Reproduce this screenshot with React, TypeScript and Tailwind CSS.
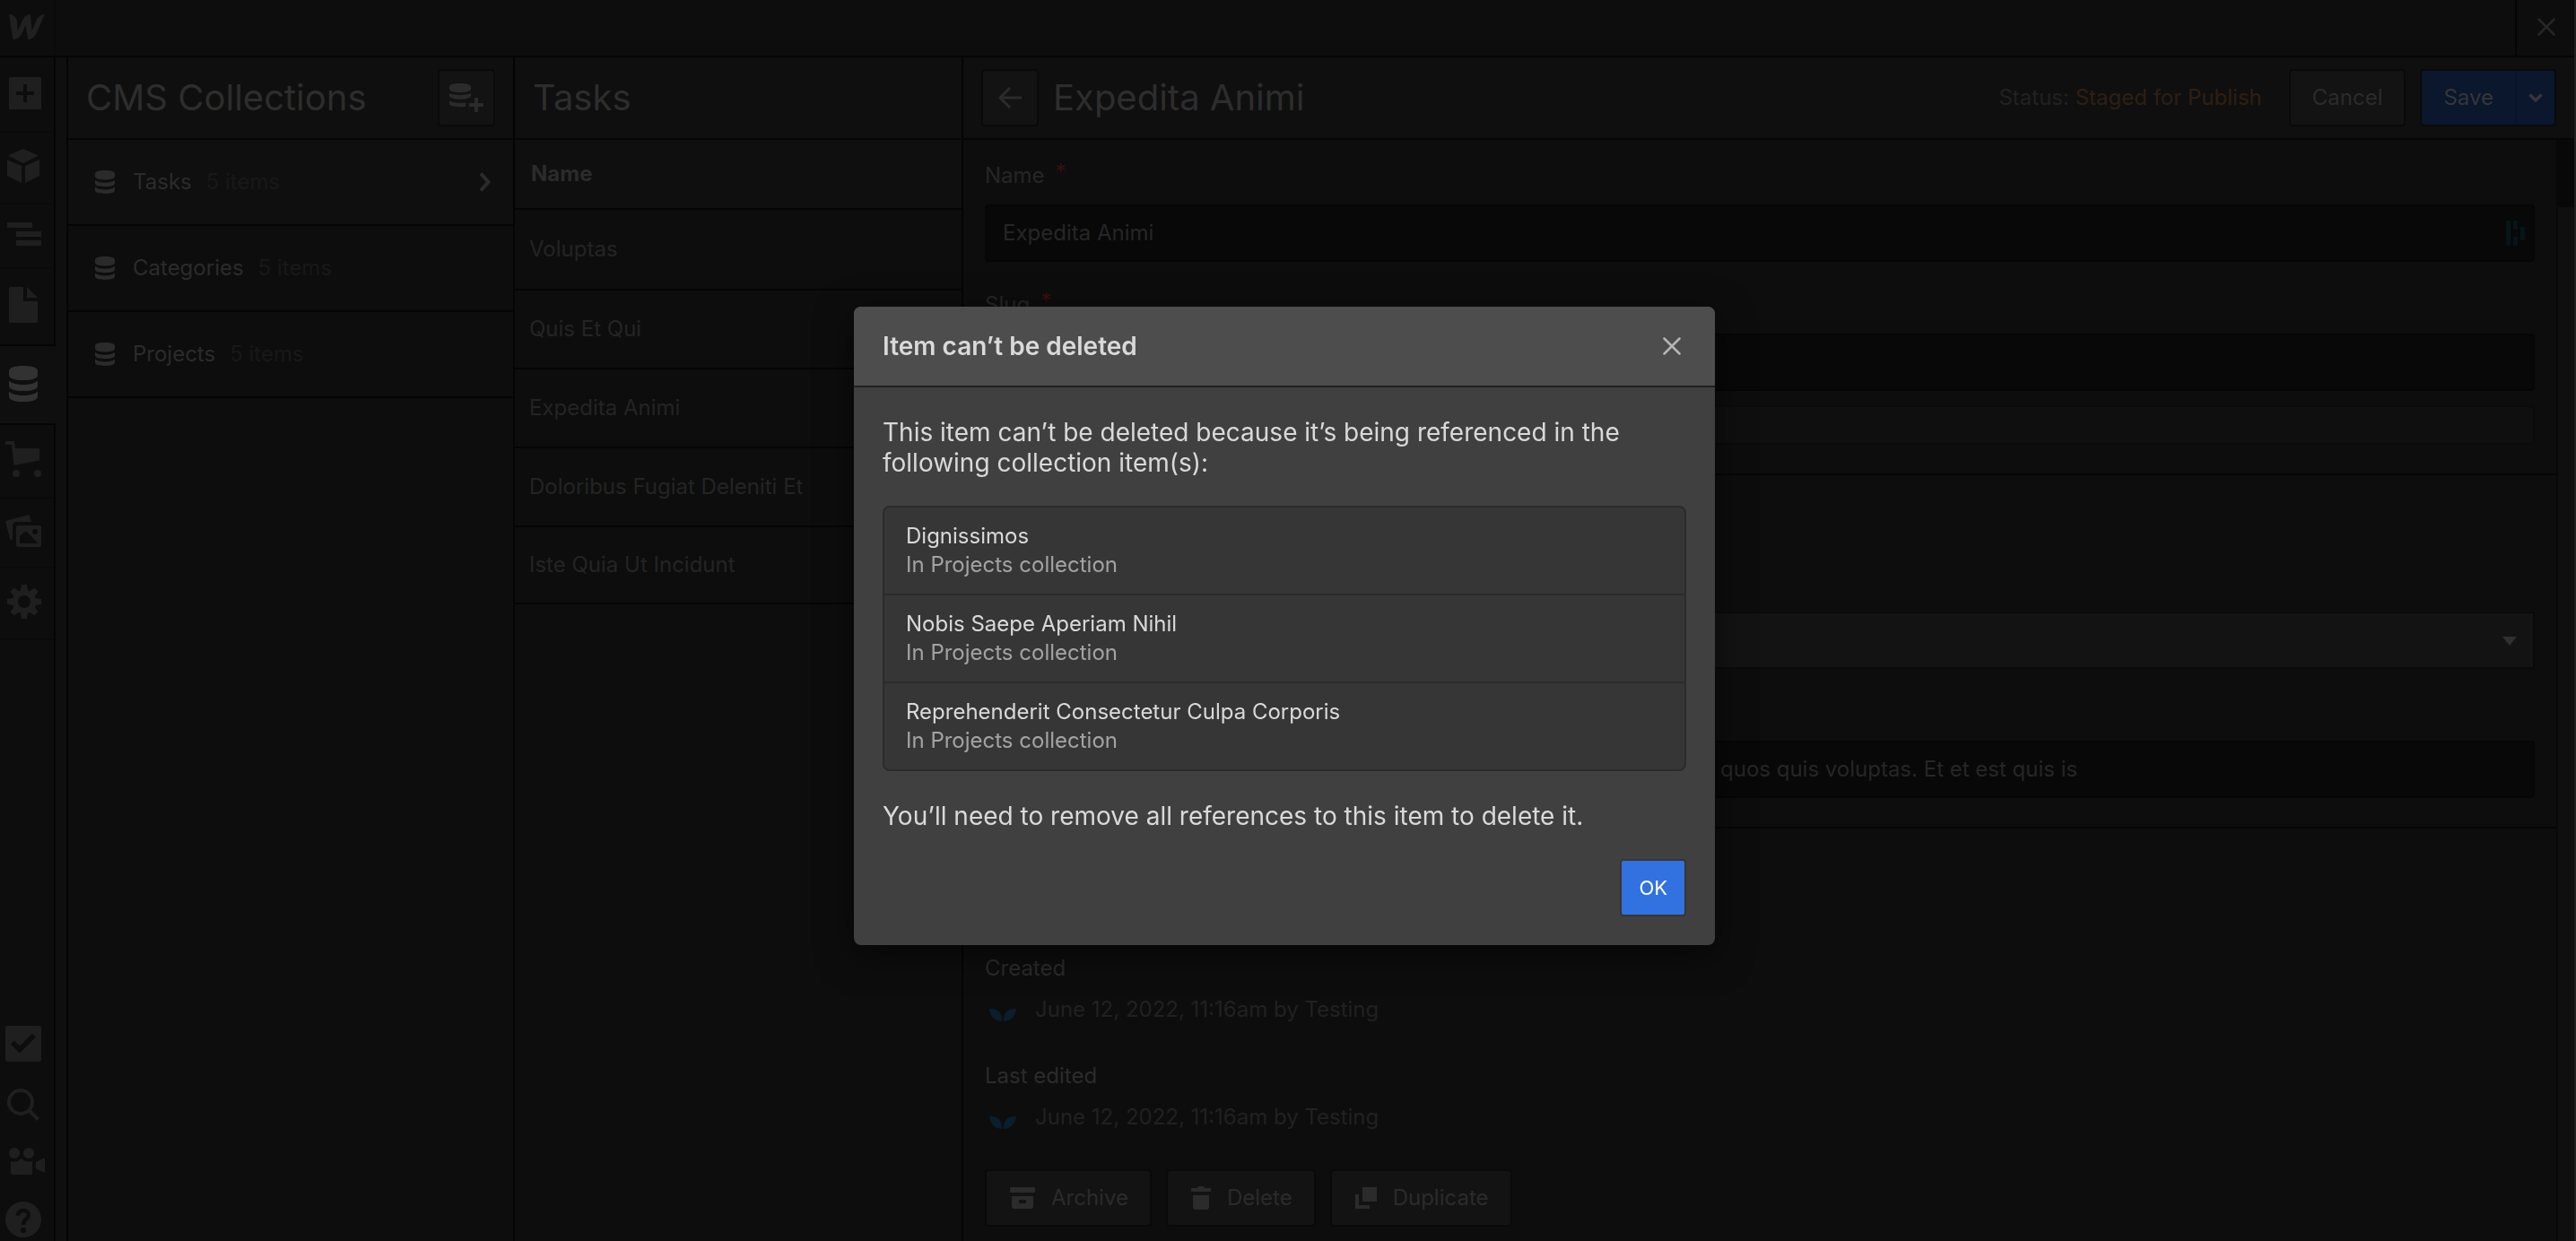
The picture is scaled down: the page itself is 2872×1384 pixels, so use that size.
import React from "react";

function WebflowMark() {
  return (
    <svg className="h-7 w-10" viewBox="0 0 40 28" fill="currentColor" aria-hidden="true">
      <path d="M0 0C5 0 8.500 3 9 8L9.700 18.500L15.500 6C17 2 20 0 24 0L25.500 18.500L31 6C32.800 2 36 0 40 0L31 20C28.500 26 25 28 21 28L18.500 12L15 20C12.500 26 9 28 4.500 28Z" />
    </svg>
  );
}

function DatabaseIcon({ className }: { className: string }) {
  return (
    <svg className={className} viewBox="0 0 32 40" preserveAspectRatio="none" fill="currentColor" aria-hidden="true">
      <path d="M0 6C0 2 6 0 16 0S32 2 32 6V10C32 14 26 16 16 16S0 14 0 10Z" />
      <path d="M0 16.500C3 19.500 9 21 16 21S29 19.500 32 16.500V22C32 26 26 28 16 28S0 26 0 22Z" />
      <path d="M0 28.500C3 31.500 9 33 16 33S29 31.500 32 28.500V34C32 38 26 40 16 40S0 38 0 34Z" />
    </svg>
  );
}

function AddIcon() {
  return (
    <svg className="size-9" viewBox="0 0 36 36" fill="currentColor" aria-hidden="true">
      <path fillRule="evenodd" d="M1.500 0H34.500Q36 0 36 1.500V34.500Q36 36 34.500 36H1.500Q0 36 0 34.500V1.500Q0 0 1.500 0ZM16 8V16H8V20H16V28H20V20H28V16H20V8Z" />
    </svg>
  );
}

function CubeIcon() {
  return (
    <svg className="h-[38px] w-9" viewBox="0 0 36 38" fill="currentColor" aria-hidden="true">
      <path d="M18 0L35 7.500L18 16L.5 7.500ZM0 12L16 19V38L0 30ZM20 19L36 12V30L20 38Z" />
    </svg>
  );
}

function NavigatorIcon() {
  return (
    <svg className="h-[26px] w-[38px]" viewBox="0 0 38 26" fill="currentColor" aria-hidden="true">
      <path d="M0 0H28V6H0ZM10 10H38V16H10ZM10 20H38V26H10Z" />
    </svg>
  );
}

function PageIcon() {
  return (
    <svg className="h-10 w-8" viewBox="0 0 32 40" fill="currentColor" aria-hidden="true">
      <path d="M1 0H16V16H32V39L31 40H1L0 39V1ZM20 0L32 12H20Z" />
    </svg>
  );
}

function CartIcon() {
  return (
    <svg className="size-10" viewBox="0 0 40 40" fill="currentColor" aria-hidden="true">
      <path d="M0 0H10L11 8H38V21.500L9.500 27L7 4H0Z" />
      <circle cx="12" cy="36" r="4" />
      <circle cx="36" cy="36" r="4" />
    </svg>
  );
}

function AssetsIcon() {
  return (
    <svg className="h-9 w-10" viewBox="0 0 40 36" fill="currentColor" aria-hidden="true">
      <path d="M0 7L26.500 0L29 8H13Q8 8 8 13V28H5.500Z" />
      <path fillRule="evenodd" d="M14 12H38Q40 12 40 14V34Q40 36 38 36H14Q12 36 12 34V14Q12 12 14 12ZM16 32H36.500L23 18L16 24ZM33 16A3 3 0 1 0 33 22A3 3 0 1 0 33 16Z" />
    </svg>
  );
}

function GearIcon() {
  const teeth = [0, 45, 90, 135, 180, 225, 270, 315];
  return (
    <svg className="size-[38px]" viewBox="-19 -19 38 38" fill="currentColor" aria-hidden="true">
      <circle r="10" fill="none" stroke="currentColor" strokeWidth="6" />
      {teeth.map((angle) => (
        <path key={angle} d="M-5.500 -11Q-3.500 -13 -3 -19H3Q3.500 -13 5.500 -11Z" transform={`rotate(${angle})`} />
      ))}
    </svg>
  );
}

function AuditIcon() {
  return (
    <svg className="size-10" viewBox="0 0 40 40" fill="currentColor" aria-hidden="true">
      <path fillRule="evenodd" d="M3 0H37Q40 0 40 3V37Q40 40 37 40H3Q0 40 0 37V3Q0 0 3 0ZM6 20.500L16 30.500L34 12.500L30 8.500L16 22.500L10 16.500Z" />
    </svg>
  );
}

function SearchIcon() {
  return (
    <svg className="size-9" viewBox="0 0 36 36" fill="none" stroke="currentColor" strokeWidth="4" aria-hidden="true">
      <circle cx="15" cy="15" r="13" />
      <path d="M24.500 24.500L34.500 34.500" />
    </svg>
  );
}

function VideoIcon() {
  return (
    <svg className="h-[30px] w-10" viewBox="0 0 40 30" fill="currentColor" aria-hidden="true">
      <circle cx="6" cy="6" r="6" />
      <circle cx="22" cy="6" r="6" />
      <path d="M2 15Q9 17 14 12Q19 17 26 15V29L25 30H3L2 29ZM30 16L40 11V28L30 23.500Z" />
    </svg>
  );
}

function HelpIcon() {
  return (
    <svg className="size-10" viewBox="0 0 40 40" aria-hidden="true">
      <circle cx="20" cy="20" r="20" fill="currentColor" />
      <path d="M14 15.500C14 8 26.500 8.500 26 15.500C25.800 19.500 20 19.500 20 26" fill="none" stroke="#0d0d0d" strokeWidth="4.500" />
      <circle cx="20" cy="32" r="3.200" fill="#0d0d0d" />
    </svg>
  );
}

function CloseIcon({ className }: { className: string }) {
  return (
    <svg className={className} viewBox="0 0 20 20" fill="none" stroke="currentColor" strokeWidth="2.500" strokeLinecap="round" aria-hidden="true">
      <path d="M1.500 1.500L18.500 18.500M18.500 1.500L1.500 18.500" />
    </svg>
  );
}

function LeafIcon() {
  return (
    <svg className="h-7 w-10" viewBox="0 0 40 28" fill="#0b1e2d" aria-hidden="true">
      <path d="M5 13C14 12.500 19 16 19.200 27C10 26.500 6 21 5 13ZM35 13C26 12.500 21 16 20.800 27C30 26.500 34 21 35 13Z" />
    </svg>
  );
}

const railTop = [
  { label: "Add elements", height: "h-[84px]", pad: "pl-2.5 pb-0.5", icon: <AddIcon /> },
  { label: "Symbols", height: "h-20", pad: "pl-2 pb-1", icon: <CubeIcon /> },
  { label: "Navigator", height: "h-[72px]", pad: "pl-2 pb-1", icon: <NavigatorIcon /> },
  { label: "Pages", height: "h-[86px]", pad: "pl-2.5 pb-1", icon: <PageIcon /> },
];

const railBottom = [
  { label: "Ecommerce", height: "h-[82px]", pad: "pl-1.5", icon: <CartIcon /> },
  { label: "Assets", height: "h-[78px]", pad: "pl-1.5", icon: <AssetsIcon /> },
  { label: "Settings", height: "h-20", pad: "pl-2", icon: <GearIcon /> },
];

const railFooter = [
  { label: "Audit", pad: "pl-1.5", icon: <AuditIcon /> },
  { label: "Search", pad: "pl-2", icon: <SearchIcon /> },
  { label: "Video tutorials", pad: "pl-2.5", icon: <VideoIcon /> },
  { label: "Help", pad: "pl-1.5", icon: <HelpIcon /> },
];

function Rail() {
  return (
    <nav aria-label="Tools" className="flex w-[62px] shrink-0 flex-col text-[#1f1f1f]">
      {railTop.map((item, i) => (
        <button
          key={item.label}
          aria-label={item.label}
          className={`flex shrink-0 items-center border-r-2 border-b-2 border-r-[#050505] bg-[#0d0d0d] ${
            i === railTop.length - 1 ? "border-b-[#050505]" : "border-b-[#0a0a0a]"
          } ${item.height} ${item.pad}`}
        >
          {item.icon}
        </button>
      ))}
      <button aria-label="CMS Collections" className="flex h-[86px] shrink-0 items-center bg-[#0f0f0f] pb-0.5 pl-2.5 text-[#323232]">
        <DatabaseIcon className="h-10 w-8" />
      </button>
      <div className="flex min-h-0 grow flex-col border-t-2 border-r-2 border-[#050505]">
        {railBottom.map((item) => (
          <button key={item.label} aria-label={item.label} className={`flex shrink-0 items-center border-b-2 border-[#0a0a0a] pb-1 ${item.height} ${item.pad}`}>
            {item.icon}
          </button>
        ))}
        <div className="mt-auto flex flex-col gap-[30px] pb-1">
          {railFooter.map((item) => (
            <button key={item.label} aria-label={item.label} className={`flex items-center ${item.pad}`}>
              {item.icon}
            </button>
          ))}
        </div>
      </div>
    </nav>
  );
}

const collections = [
  { name: "Tasks", count: "5 items", active: true },
  { name: "Categories", count: "5 items", active: false },
  { name: "Projects", count: "5 items", active: false },
];

function Collections() {
  return (
    <section className="flex w-[498px] shrink-0 flex-col border-r-2 border-[#050505]">
      <header className="flex h-[92px] shrink-0 items-center justify-between border-b-2 border-[#050505] bg-[#0f0f0f] px-5">
        <h2 className="text-[40px] leading-none text-[#2d2d2d]">CMS Collections</h2>
        <button aria-label="Add collection" className="flex size-16 items-center justify-center rounded border-2 border-[#0a0a0a] bg-[#131313] text-[#2b2b2b]">
          <svg className="h-8 w-[38px]" viewBox="0 0 38 32" fill="currentColor" aria-hidden="true">
            <path d="M0 4C0 1.500 4 0 12 0S24 1.500 24 4V6C24 8.500 20 10 12 10S0 8.500 0 6ZM0 11C5 13.500 19 13.500 24 11V14C22 19 2 19 0 14ZM0 19.500C4 21.500 10 22 18 21.500V26C9 26.500 0 25.500 0 23Z" />
            <path d="M28 16H32V22H38V26H32V32H28V26H22V22H28Z" />
          </svg>
        </button>
      </header>
      <ul>
        {collections.map((item) => (
          <li key={item.name} className="border-b-2 border-[#050505]">
            <button className={`flex h-[94px] w-full items-center pr-6 pl-[30px] text-2xl ${item.active ? "bg-[#0f0f0f]" : "bg-[#0d0d0d]"}`}>
              <DatabaseIcon className="h-[26px] w-[22px] text-[#2b2b2b]" />
              <span className="ml-5 text-[#2b2b2b]">{item.name}</span>
              <span className="ml-4 text-[#181818]">{item.count}</span>
              {item.active && (
                <svg className="ml-auto h-[22px] w-3.5" viewBox="0 0 14 22" fill="none" stroke="#2b2b2b" strokeWidth="4" aria-hidden="true">
                  <path d="M2 1.500L10.500 11L2 20.500" />
                </svg>
              )}
            </button>
          </li>
        ))}
      </ul>
    </section>
  );
}

const tasks = [
  { name: "Voluptas", height: "h-[90px]" },
  { name: "Quis Et Qui", height: "h-[88px]" },
  { name: "Expedita Animi", height: "h-[88px]" },
  { name: "Doloribus Fugiat Deleniti Et", height: "h-[88px]" },
  { name: "Iste Quia Ut Incidunt", height: "h-[86px]" },
];

function Tasks() {
  return (
    <section className="flex w-[500px] shrink-0 flex-col border-r-2 border-[#050505]">
      <header className="flex h-[92px] shrink-0 items-center border-b-2 border-[#050505] bg-[#0f0f0f] pl-5">
        <h2 className="text-[40px] leading-none text-[#2d2d2d]">Tasks</h2>
      </header>
      <table className="w-full border-separate border-spacing-0 text-left text-2xl text-[#242424]">
        <thead>
          <tr>
            <th scope="col" className="h-[78px] border-b-2 border-[#050505] bg-[#0f0f0f] p-0 pl-[18px] font-bold text-[#2b2b2b]">
              Name
            </th>
          </tr>
        </thead>
        <tbody>
          {tasks.map((task) => (
            <tr key={task.name}>
              <td className={`border-b-2 border-[#050505] p-0 pl-4 ${task.height}`}>{task.name}</td>
            </tr>
          ))}
        </tbody>
      </table>
    </section>
  );
}

function FieldLabel({ htmlFor, text }: { htmlFor: string; text: string }) {
  return (
    <label htmlFor={htmlFor} className="mb-4 flex text-2xl leading-8 text-[#262626]">
      {text}
      <span className="ml-3 leading-6 text-[#3a1010]">*</span>
    </label>
  );
}

const inputStyle =
  "block h-16 w-full rounded border-2 border-[#060606] bg-[#080808] px-[18px] pb-0.5 text-2xl text-[#262626]";

const actionStyle =
  "flex h-16 items-center gap-[18px] rounded border-2 border-[#0a0a0a] bg-[#131313] pr-6 pl-[26px] text-2xl text-[#2b2b2b]";

function DateRow({ title }: { title: string }) {
  return (
    <div>
      <h3 className="text-2xl leading-8 text-[#2b2b2b]">{title}</h3>
      <p className="mt-3.5 flex items-center gap-4 text-2xl leading-8 text-[#212121]">
        <LeafIcon />
        June 12, 2022, 11:16am by Testing
      </p>
    </div>
  );
}

function Editor() {
  return (
    <section className="flex min-w-0 grow flex-col">
      <header className="flex h-[92px] shrink-0 items-center border-b-2 border-[#050505] bg-[#0f0f0f] px-5">
        <button aria-label="Back" className="flex size-16 items-center justify-center rounded border-2 border-[#0a0a0a] bg-[#131313] text-[#2b2b2b]">
          <svg className="h-6 w-[26px]" viewBox="0 0 26 24" fill="none" stroke="currentColor" strokeWidth="3" aria-hidden="true">
            <path d="M13 1L2 12L13 23M2 12H26" />
          </svg>
        </button>
        <h2 className="ml-4 text-[40px] leading-none text-[#2d2d2d]">Expedita Animi</h2>
        <p className="mr-[30px] ml-auto text-2xl text-[#212121]">
          Status: <span className="text-[#2e1f13]">Staged for Publish</span>
        </p>
        <button className="h-16 rounded border-2 border-[#0a0a0a] bg-[#131313] px-6 text-2xl text-[#2b2b2b]">Cancel</button>
        <div className="ml-4 flex h-16 rounded border-2 border-[#0a0a0a] bg-[#0a172d] text-2xl text-[#363636]">
          <button className="border-r-2 border-[#09132a] px-6">Save</button>
          <button aria-label="More save options" className="flex w-[42px] items-center justify-center">
            <svg className="h-2.5 w-4" viewBox="0 0 16 10" fill="none" stroke="currentColor" strokeWidth="3.500" aria-hidden="true">
              <path d="M1.500 1.500L8 8L14.500 1.500" />
            </svg>
          </button>
        </div>
      </header>
      <div className="flex min-h-0 grow">
        <form className="min-w-0 grow overflow-hidden border-r-2 border-[#080808]">
          <div className="border-b-2 border-[#060606] px-6 pt-6 pb-8">
            <FieldLabel htmlFor="name" text="Name" />
            <div className="relative">
              <input id="name" className={inputStyle} defaultValue="Expedita Animi" />
              <svg className="absolute top-[18px] right-2.5 h-7 w-[22px]" viewBox="0 0 22 28" fill="#061519" aria-hidden="true">
                <rect width="5" height="28" rx="1" />
                <rect x="8" width="5" height="10" rx="1" />
                <rect x="8" y="18" width="5" height="10" rx="1" />
                <rect x="16" y="7" width="5" height="15" rx="1" />
              </svg>
            </div>
            <div className="mt-8">
              <FieldLabel htmlFor="slug" text="Slug" />
              <input id="slug" className={inputStyle} />
            </div>
            <div className="mt-4 h-11 rounded border-2 border-[#0b0b0b] bg-[#0f0f0f]" />
          </div>
          <div className="border-b-2 border-[#060606] px-6 pt-38 pb-8">
            <div className="relative">
              <select aria-label="Category" className="block h-16 w-full appearance-none border-2 border-[#0a0a0a] bg-[#131313] px-[18px] text-2xl text-[#2b2b2b]" />
              <svg className="pointer-events-none absolute top-7 right-5 h-2.5 w-4" viewBox="0 0 16 10" fill="#303030" aria-hidden="true">
                <path d="M0 0H16L8 10Z" />
              </svg>
            </div>
            <input
              aria-label="Description"
              className="mt-20 block h-16 w-full rounded border-2 border-[#060606] bg-[#080808] pr-5 pb-0.5 pl-[818px] text-2xl text-[#262626]"
              defaultValue="quos quis voluptas. Et et est quis is"
            />
          </div>
          <div className="px-6 pt-35">
            <div className="flex flex-col gap-[42px]">
              <DateRow title="Created" />
              <DateRow title="Last edited" />
              <div className="flex gap-4">
                <button type="button" className={actionStyle}>
                  <svg className="h-6 w-7" viewBox="0 0 28 24" fill="currentColor" aria-hidden="true">
                    <path fillRule="evenodd" d="M1 0H27L28 1V6H0V1ZM2 10H26V22L24.500 24H3.500L2 22ZM10 14V18H18V14Z" />
                  </svg>
                  Archive
                </button>
                <button type="button" className={actionStyle}>
                  <svg className="h-[26px] w-[22px]" viewBox="0 0 22 26" fill="currentColor" aria-hidden="true">
                    <path d="M0 2H7L8 0H14L15 2H22V6H0ZM2 10H20V24L18 26H4L2 24Z" />
                  </svg>
                  Delete
                </button>
                <button type="button" className={actionStyle}>
                  <svg className="size-6" viewBox="0 0 24 24" fill="currentColor" aria-hidden="true">
                    <path d="M8 0H24V16H8ZM0 8H4V20H16V24H0Z" />
                  </svg>
                  Duplicate
                </button>
              </div>
            </div>
          </div>
        </form>
        <div className="w-[18px] shrink-0 bg-[#0f0f0f]">
          <div className="h-[75px] bg-[#080808]" />
        </div>
      </div>
    </section>
  );
}

const references = ["Dignissimos", "Nobis Saepe Aperiam Nihil", "Reprehenderit Consectetur Culpa Corporis"];

function BlockedDialog() {
  return (
    <div className="fixed inset-0 flex items-center justify-center pt-3 pr-2">
      <div
        role="dialog"
        aria-modal="true"
        aria-labelledby="dialog-title"
        className="w-full max-w-[960px] overflow-hidden rounded-lg bg-[#404040] text-[28px] leading-[34px] text-[#d9d9d9] shadow-[0_10px_40px_rgba(0,0,0,0.5)]"
      >
        <header className="flex h-[90px] items-center justify-between border-b-2 border-[#212121] bg-[#4d4d4d] pr-[38px] pl-8">
          <h1 id="dialog-title" className="font-semibold">
            Item can’t be deleted
          </h1>
          <button aria-label="Close" className="text-[#b5b5b5]">
            <CloseIcon className="size-5" />
          </button>
        </header>
        <div className="px-8 pt-[33px] pb-8">
          <p>This item can’t be deleted because it’s being referenced in the following collection item(s):</p>
          <ul className="mt-[31px] divide-y-2 divide-[#2b2b2b] rounded-lg border-2 border-[#2b2b2b] bg-[#363636]">
            {references.map((name) => (
              <li key={name} className="px-6 py-4 text-2xl leading-8">
                <p>{name}</p>
                <p className="text-[#a3a3a3]">In Projects collection</p>
              </li>
            ))}
          </ul>
          <p className="mt-[33px]">You’ll need to remove all references to this item to delete it.</p>
          <div className="mt-[31px] flex justify-end">
            <button className="h-16 rounded border-2 border-[#363636] bg-[#3172e0] px-[19px] text-[22px] text-white">OK</button>
          </div>
        </div>
      </div>
    </div>
  );
}

export default function App() {
  return (
    <div className="flex h-screen flex-col overflow-hidden border-r-2 border-[#1f1f1f] bg-[#0d0d0d] font-['Inter',sans-serif]">
      <div className="flex h-16 shrink-0 items-stretch border-b-2 border-[#050505]">
        <a href="#" aria-label="Dashboard" className="flex w-[62px] items-center border-r-2 border-[#0b0b0b] pb-0.5 pl-2.5 text-[#202020]">
          <WebflowMark />
        </a>
        <button aria-label="Close panel" className="ml-auto flex w-[66px] items-center justify-center border-l-2 border-[#050505] pb-0.5 pl-0.5 text-[#262626]">
          <CloseIcon className="size-5" />
        </button>
      </div>
      <div className="flex min-h-0 grow">
        <Rail />
        <div className="w-3.5 shrink-0 border-r-2 border-[#050505] bg-[#0f0f0f]" />
        <Collections />
        <Tasks />
        <Editor />
      </div>
      <BlockedDialog />
    </div>
  );
}
